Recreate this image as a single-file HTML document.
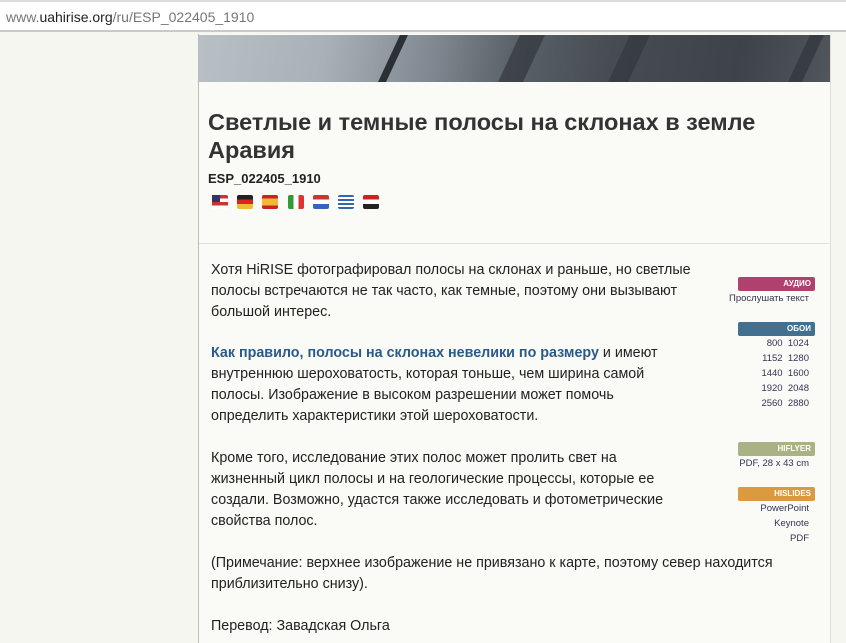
<!DOCTYPE html><html><head><meta charset="utf-8"><style>
body{margin:0;width:846px;height:643px;overflow:hidden;background:#f6f6f1;font-family:"Liberation Sans",sans-serif;position:relative}
.bar{position:absolute;left:0;top:0;width:846px;height:32px;background:#fff;border-bottom:2px solid #c9c9c9;box-sizing:border-box;border-top:2px solid #ddd}
.bar span{position:absolute;left:6px;top:7px;font-size:14px;color:#777}
.bar b{font-weight:normal;color:#222}
.panel{position:absolute;left:198px;top:34px;width:631px;height:609px;background:#fafaf7;border-left:1px solid #bbb;border-right:1px solid #ddd}
.img{position:absolute;left:0;top:1px;width:631px;height:47px;background:linear-gradient(100deg,#b8c0c6 0%,#a9b1b8 20%,#7d868e 38%,#5a6168 50%,#474c53 65%,#3e4349 85%,#50565c 100%)}
.s{position:absolute;background:#2b3036;transform:skewX(-25deg);height:47px;top:0}
h1{position:absolute;left:9px;top:74px;margin:0;font-size:23.5px;line-height:28px;color:#333;width:580px}
.id{position:absolute;left:9px;top:137px;font-size:13px;font-weight:bold;color:#222}
.fl{position:absolute;top:161px;width:16px;height:14px;border-radius:2px}
.hr{position:absolute;left:0;top:209px;width:631px;border-top:1px solid #e2e2e2}
.t{position:absolute;left:12px;font-size:14.3px;line-height:21px;color:#222;width:560px}
a{color:#2a5a8a;font-weight:bold;text-decoration:none}
.lab{position:absolute;left:539px;width:77px;height:14px;font-size:8px;font-weight:bold;color:#fff;text-align:right;box-sizing:border-box;padding-right:4px;line-height:14px;border-radius:2px}
.sm{position:absolute;font-size:9.5px;color:#335;text-align:right;right:21px;line-height:15px}
</style></head><body>
<div class="bar"><span>www.<b>uahirise.org</b>/ru/ESP_022405_1910</span></div>
<div class="panel">
<div class="img"><div class="s" style="left:190px;width:8px"></div><div class="s" style="left:310px;width:25px;opacity:.6"></div><div class="s" style="left:420px;width:20px;opacity:.5"></div><div class="s" style="left:600px;width:14px;opacity:.6"></div></div>
<h1>Светлые и темные полосы на склонах в земле Аравия</h1>
<div class="id">ESP_022405_1910</div>
<div class="fl" style="left:13px;background:linear-gradient(#c33 0 25%,#fff 25% 50%,#c33 50% 75%,#fff 75%)"><div style="width:8px;height:7px;background:#336"></div></div>
<div class="fl" style="left:38px;background:linear-gradient(#222 33%,#d22 33% 66%,#eb3 66%)"></div>
<div class="fl" style="left:63px;background:linear-gradient(#c22 25%,#eb3 25% 75%,#c22 75%)"></div>
<div class="fl" style="left:89px;background:linear-gradient(90deg,#393 33%,#fff 33% 66%,#d33 66%)"></div>
<div class="fl" style="left:114px;background:linear-gradient(#c33 33%,#fff 33% 66%,#36b 66%)"></div>
<div class="fl" style="left:139px;background:repeating-linear-gradient(#36a 0 2px,#fff 2px 4px)"></div>
<div class="fl" style="left:164px;background:linear-gradient(#c22 33%,#fff 33% 66%,#222 66%)"></div>
<div class="hr"></div>
<div class="t" style="top:226px;width:490px">Хотя HiRISE фотографировал полосы на склонах и раньше, но светлые полосы встречаются не так часто, как темные, поэтому они вызывают большой интерес.</div>
<div class="t" style="top:309px;width:480px"><a>Как правило, полосы на склонах невелики по размеру</a> и имеют внутреннюю шероховатость, которая тоньше, чем ширина самой полосы. Изображение в высоком разрешении может помочь определить характеристики этой шероховатости.</div>
<div class="t" style="top:414px;width:480px">Кроме того, исследование этих полос может пролить свет на жизненный цикл полосы и на геологические процессы, которые ее создали. Возможно, удастся также исследовать и фотометрические свойства полос.</div>
<div class="t" style="top:519px;width:590px">(Примечание: верхнее изображение не привязано к карте, поэтому север находится приблизительно снизу).</div>
<div class="t" style="top:582px">Перевод: Завадская Ольга</div>
<div class="lab" style="top:243px;background:#b0406e">АУДИО</div>
<div class="sm" style="top:257px">Прослушать текст</div>
<div class="lab" style="top:288px;background:#43708f">ОБОИ</div>
<div class="sm" style="top:302px">800&nbsp;&nbsp;1024<br>1152&nbsp;&nbsp;1280<br>1440&nbsp;&nbsp;1600<br>1920&nbsp;&nbsp;2048<br>2560&nbsp;&nbsp;2880</div>
<div class="lab" style="top:408px;background:#a8b284">HIFLYER</div>
<div class="sm" style="top:422px">PDF, 28 x 43 cm</div>
<div class="lab" style="top:453px;background:#dc9a3e">HISLIDES</div>
<div class="sm" style="top:467px">PowerPoint<br>Keynote<br>PDF</div>
</div>
</body></html>
